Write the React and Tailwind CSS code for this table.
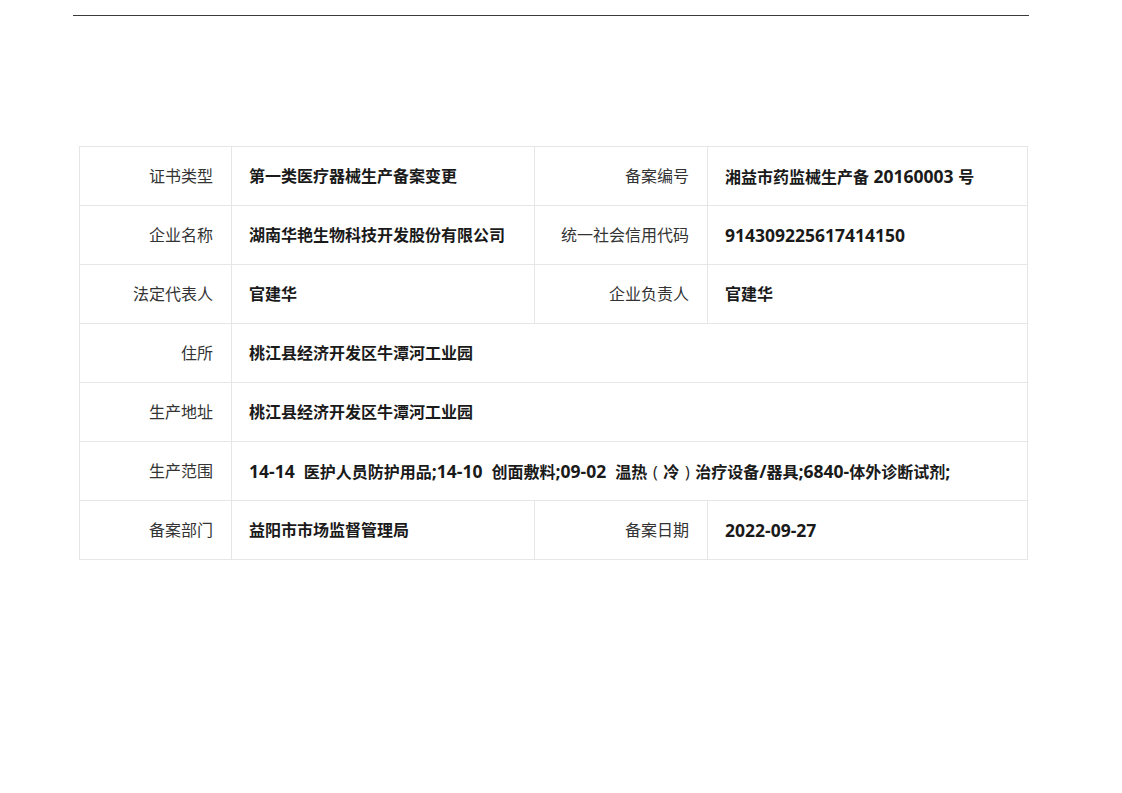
import React from "react";

const font = { fontFamily: '"Open Sans", "Noto Sans CJK SC", sans-serif' };

function Mixed({ text }) {
  const parts = text.split(/([0-9A-Za-z\-;\/ ]+|[（）])/).filter((p) => p !== "");
  return parts.map((p, i) => {
    if (p === "（") {
      return (
        <span key={i} className="inline-block w-[16px] text-center font-normal">
          (
        </span>
      );
    }
    if (p === "）") {
      return (
        <span key={i} className="inline-block w-[16px] text-center font-normal">
          )
        </span>
      );
    }
    if (/^[0-9A-Za-z\-;\/ ]+$/.test(p)) {
      return (
        <span key={i} className="text-[17.5px] whitespace-pre">
          {p}
        </span>
      );
    }
    return <span key={i}>{p}</span>;
  });
}

function Label({ children }) {
  return (
    <td className="h-[59px] border border-[#e6e6e6] pr-[18px] text-right align-middle text-[16px] font-normal text-[#333]">
      {children}
    </td>
  );
}

function Value({ text, colSpan }) {
  return (
    <td
      colSpan={colSpan}
      className="h-[59px] border border-[#e6e6e6] pl-[17px] text-left align-middle text-[16px] font-bold text-[#1a1a1a] whitespace-nowrap"
    >
      <Mixed text={text} />
    </td>
  );
}

export default function App() {
  return (
    <div className="w-[1122px] h-[793px] bg-white" style={font}>
      <div className="pt-[15px] pl-[73px]">
        <div className="w-[956px] h-px bg-[#3a3a3a]" />
      </div>
      <div className="pl-[79px] pt-[130px]">
        <table className="border-collapse table-fixed w-[948px]">
          <colgroup>
            <col className="w-[152px]" />
            <col className="w-[303px]" />
            <col className="w-[173px]" />
            <col className="w-[320px]" />
          </colgroup>
          <tbody>
            <tr>
              <Label>证书类型</Label>
              <Value text="第一类医疗器械生产备案变更" />
              <Label>备案编号</Label>
              <Value text="湘益市药监械生产备 20160003 号" />
            </tr>
            <tr>
              <Label>企业名称</Label>
              <Value text="湖南华艳生物科技开发股份有限公司" />
              <Label>统一社会信用代码</Label>
              <Value text="914309225617414150" />
            </tr>
            <tr>
              <Label>法定代表人</Label>
              <Value text="官建华" />
              <Label>企业负责人</Label>
              <Value text="官建华" />
            </tr>
            <tr>
              <Label>住所</Label>
              <Value colSpan={3} text="桃江县经济开发区牛潭河工业园" />
            </tr>
            <tr>
              <Label>生产地址</Label>
              <Value colSpan={3} text="桃江县经济开发区牛潭河工业园" />
            </tr>
            <tr>
              <Label>生产范围</Label>
              <Value
                colSpan={3}
                text="14-14  医护人员防护用品;14-10  创面敷料;09-02  温热（冷）治疗设备/器具;6840-体外诊断试剂;"
              />
            </tr>
            <tr>
              <Label>备案部门</Label>
              <Value text="益阳市市场监督管理局" />
              <Label>备案日期</Label>
              <Value text="2022-09-27" />
            </tr>
          </tbody>
        </table>
      </div>
    </div>
  );
}
